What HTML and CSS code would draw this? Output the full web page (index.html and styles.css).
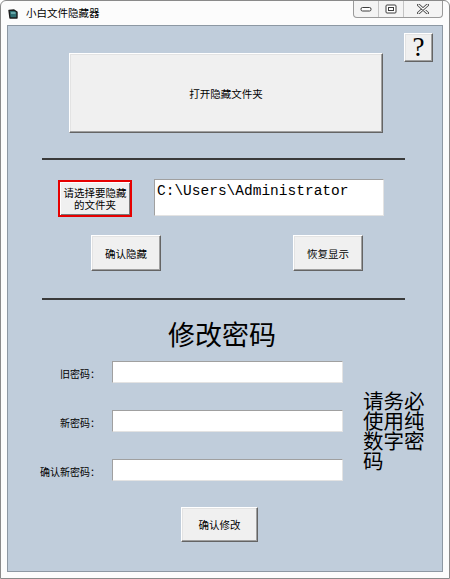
FILE: index.html
```html
<!DOCTYPE html>
<html lang="zh-CN">

<head>
    <meta charset="UTF-8">
    <title>小白文件隐藏器</title>
    <link rel="stylesheet" href="styles.css">
</head>

<body>
    <div class="window">
        <div class="titlebar">
            <svg class="app-icon" width="10" height="10" viewBox="0 0 10 10">
                <path d="M1 1.5 L6 1 L9 3 L9 9 L2 9 Z" fill="#2e6f73" stroke="#1b1b1b" stroke-width="1.4" stroke-linejoin="round"/>
                <path d="M3 4 L7.5 4" stroke="#9fe0e0" stroke-width="1"/>
            </svg>
            <span class="title">小白文件隐藏器</span>
            <div class="caption">
                <span class="cap cap-min">
                    <svg width="12" height="6" viewBox="0 0 12 6"><rect x="1" y="1.5" width="10" height="3.5" rx="1.5" fill="#fff" stroke="#3c3c3c" stroke-width="1"/></svg>
                </span>
                <span class="cap cap-max">
                    <svg width="12" height="10" viewBox="0 0 12 10"><rect x="1" y="1" width="10" height="8" rx="1" fill="#fff" stroke="#3c3c3c" stroke-width="1"/><rect x="3.5" y="3.5" width="5" height="3" fill="none" stroke="#3c3c3c" stroke-width="1"/></svg>
                </span>
                <span class="cap cap-close">
                    <svg width="12" height="10" viewBox="0 0 12 10">
                        <path d="M1.5 1 L10.5 9 M10.5 1 L1.5 9" stroke="#4a4a4a" stroke-width="3" stroke-linecap="round"/>
                        <path d="M1.5 1 L10.5 9 M10.5 1 L1.5 9" stroke="#fff" stroke-width="1.2" stroke-linecap="round"/>
                    </svg>
                </span>
            </div>
        </div>

        <div class="client">
            <button class="btn help">?</button>

            <button class="btn open">打开隐藏文件夹</button>

            <div class="rule"></div>

            <div class="pick-row">
                <button class="btn pick">请选择要隐藏<br>的文件夹</button>
                <input class="path" type="text" value="C:\Users\Administrator">
            </div>

            <div class="action-row">
                <button class="btn act act-hide">确认隐藏</button>
                <button class="btn act act-show">恢复显示</button>
            </div>

            <div class="rule rule-second"></div>

            <h2 class="pw-title">修改密码</h2>

            <div class="pw-area">
                <div class="pw-rows">
                    <label class="pw-row"><span class="pw-label">旧密码：</span><input class="pw-input" type="text"></label>
                    <label class="pw-row"><span class="pw-label">新密码：</span><input class="pw-input" type="text"></label>
                    <label class="pw-row"><span class="pw-label">确认新密码：</span><input class="pw-input" type="text"></label>
                </div>
                <p class="note">请务必使用纯数字密码</p>
            </div>

            <button class="btn submit">确认修改</button>
        </div>
    </div>
</body>

</html>
```

FILE: styles.css
```css
body {
    margin: 0;
    background: #ffffff;
    font-family: "Noto Sans CJK SC", sans-serif;
}

.window {
    width: 450px;
    height: 579px;
    box-sizing: border-box;
    border: 1px solid #8a8a8a;
    border-radius: 6px 6px 0 0;
    background: #fcfcfc;
    padding: 0 6px 6px;
    display: flex;
    flex-direction: column;
}

.titlebar {
    height: 24px;
    display: flex;
    align-items: flex-start;
    flex-shrink: 0;
}

.app-icon {
    margin: 8px 0 0 1px;
}

.title {
    margin-left: 8px;
    font-size: 10.5px;
    line-height: 24px;
    color: #000;
}

.caption {
    margin-left: auto;
    display: flex;
    height: 17px;
    box-sizing: border-box;
    border: 1px solid #9a9a9a;
    border-top: none;
    border-radius: 0 0 4px 4px;
    background: #f4f4f4;
}

.cap {
    display: flex;
    align-items: center;
    justify-content: center;
    width: 24px;
}

.cap-max {
    border-left: 1px solid #c4c4c4;
}

.cap-close {
    width: 38px;
    border-left: 1px solid #c4c4c4;
}

.client {
    flex: 1;
    position: relative;
    border: 1px solid #8d98a3;
    background: #c0cddb;
}

.btn {
    display: block;
    box-sizing: border-box;
    padding: 0;
    font-family: "Noto Sans CJK SC", sans-serif;
    font-size: 10.5px;
    color: #000;
    background: #f0f0f0;
    border: 1px solid;
    border-color: #ffffff #646464 #646464 #ffffff;
    box-shadow: inset -1px -1px #a0a0a0, inset 1px 1px #e3e3e3;
}

.help {
    position: absolute;
    top: 7px;
    right: 9px;
    width: 29px;
    height: 29px;
    font-family: "Liberation Serif", serif;
    font-size: 27px;
    line-height: 1;
}

.open {
    margin: 27px 0 0 61px;
    width: 314px;
    height: 80px;
}

.rule {
    margin: 25px 0 0 34px;
    width: 363px;
    height: 2px;
    background: #3a3a3a;
}

.rule-second {
    margin-top: 27px;
}

.pick-row {
    display: flex;
    align-items: flex-start;
    margin-top: 20px;
}

.pick {
    margin-left: 50px;
    width: 74px;
    height: 37px;
    border: 2px solid #e60000;
    box-shadow: inset 1px 1px #ffffff, inset -1px -1px #7a7a7a;
    font-size: 10.5px;
    line-height: 12px;
}

.path {
    margin: -1px 0 0 22px;
    width: 230px;
    height: 37px;
    box-sizing: border-box;
    border: 1px solid;
    border-color: #a0a0a0 #e3e3e3 #e3e3e3 #a0a0a0;
    padding: 3px 2px 17px;
    font-family: "Liberation Mono", monospace;
    font-size: 14.5px;
    color: #000;
    background: #fff;
    outline: none;
}

.action-row {
    display: flex;
    margin-top: 18px;
}

.act {
    width: 70px;
    height: 36px;
}

.act-hide {
    margin-left: 83px;
}

.act-show {
    margin-left: 132px;
}

.pw-title {
    margin: 20px 0 0 160px;
    font-size: 27px;
    line-height: 27px;
    font-weight: normal;
    color: #000;
}

.pw-area {
    display: flex;
    align-items: flex-start;
    margin-top: 14px;
}

.pw-rows {
    display: flex;
    flex-direction: column;
    gap: 27px;
}

.pw-row {
    display: flex;
    align-items: center;
}

.pw-label {
    width: 92px;
    padding-top: 2px;
    text-align: right;
    font-size: 10px;
    color: #000;
}

.pw-input {
    margin-left: 12px;
    width: 231px;
    height: 22px;
    box-sizing: border-box;
    border: 1px solid;
    border-color: #a0a0a0 #e3e3e3 #e3e3e3 #a0a0a0;
    padding: 0 2px;
    background: #fff;
    outline: none;
}

.note {
    margin: 29px 0 0 20px;
    width: 62px;
    font-size: 20.5px;
    line-height: 20px;
    color: #000;
}

.submit {
    margin: 26px 0 0 173px;
    width: 77px;
    height: 35px;
}
```
